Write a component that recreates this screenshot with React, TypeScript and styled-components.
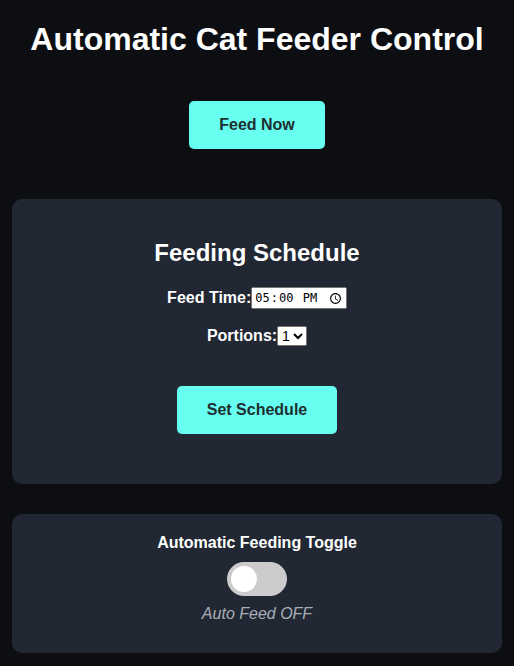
import React, { useState } from "react";
import styled, { createGlobalStyle } from "styled-components";

const GlobalStyle = createGlobalStyle`
  body {
    margin: 0;
    background: #0c0e12;
    color: #ffffff;
    font-family: "Liberation Sans", Arial, sans-serif;
  }
`;

const Page = styled.div`
  padding: 0 12px;
  text-align: center;
`;

const Title = styled.h1`
  font-size: 32px;
  font-weight: bold;
  margin: 21.44px 0;
`;

const FeedRow = styled.div`
  margin: 43px 0 50px;
`;

const ActionButton = styled.button`
  background: #66fff0;
  color: #1e2f31;
  border: none;
  border-radius: 5px;
  padding: 15px 30px;
  font-family: "Liberation Sans", Arial, sans-serif;
  font-size: 16px;
  font-weight: bold;
  cursor: pointer;
`;

const Card = styled.section<{ $gap?: number }>`
  background: #212833;
  border-radius: 10px;
  padding: 20px;
  margin-bottom: ${(p) => p.$gap ?? 0}px;
`;

const CardTitle = styled.h2`
  font-size: 24px;
  margin: 20px 0;
`;

const Field = styled.div`
  display: flex;
  justify-content: center;
  align-items: center;
  margin-bottom: 17px;
`;

const Label = styled.label`
  font-size: 16px;
  font-weight: bold;
`;

const TimeInput = styled.input`
  box-sizing: border-box;
  height: 22px;
  font-size: 12px;
`;

const Select = styled.select`
  height: 20px;
  font-size: 14px;
`;

const ScheduleButton = styled(ActionButton)`
  margin: 23px 0 30px;
`;

const ToggleTitle = styled.div`
  font-size: 16px;
  font-weight: bold;
`;

const Switch = styled.label`
  position: relative;
  display: inline-block;
  width: 60px;
  height: 34px;
  margin-top: 10px;
  cursor: pointer;

  input {
    opacity: 0;
    width: 0;
    height: 0;
  }
`;

const Slider = styled.span<{ $on: boolean }>`
  position: absolute;
  inset: 0;
  background: ${(p) => (p.$on ? "#66fff0" : "#cccccc")};
  border-radius: 34px;
  transition: 0.3s;

  &::before {
    content: "";
    position: absolute;
    width: 26px;
    height: 26px;
    left: 4px;
    bottom: 4px;
    background: #ffffff;
    border-radius: 50%;
    transition: 0.3s;
    transform: translateX(${(p) => (p.$on ? 26 : 0)}px);
  }
`;

const Status = styled.p`
  font-style: italic;
  color: #a9aeb6;
  font-size: 16px;
  margin: 9px 0 10px;
`;

export default function App() {
  const [auto, setAuto] = useState(false);

  return (
    <Page>
      <GlobalStyle />
      <Title>Automatic Cat Feeder Control</Title>
      <FeedRow>
        <ActionButton>Feed Now</ActionButton>
      </FeedRow>

      <Card $gap={30}>
        <CardTitle>Feeding Schedule</CardTitle>
        <Field>
          <Label htmlFor="feed-time">Feed Time:</Label>
          <TimeInput id="feed-time" type="time" defaultValue="17:00" />
        </Field>
        <Field>
          <Label htmlFor="portions">Portions:</Label>
          <Select id="portions" defaultValue="1">
            <option>1</option>
            <option>2</option>
            <option>3</option>
          </Select>
        </Field>
        <ScheduleButton>Set Schedule</ScheduleButton>
      </Card>

      <Card>
        <ToggleTitle>Automatic Feeding Toggle</ToggleTitle>
        <Switch>
          <input type="checkbox" checked={auto} onChange={() => setAuto(!auto)} />
          <Slider $on={auto} />
        </Switch>
        <Status>Auto Feed {auto ? "ON" : "OFF"}</Status>
      </Card>
    </Page>
  );
}
